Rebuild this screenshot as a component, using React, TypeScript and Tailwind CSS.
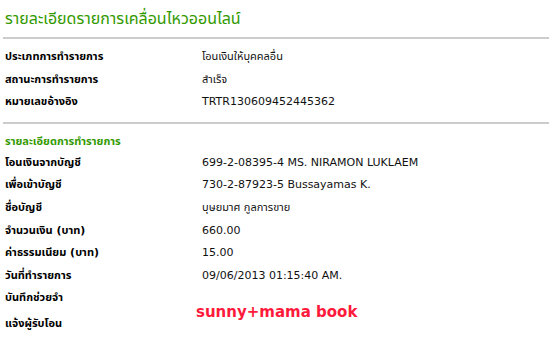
const FONT = "font-['Tahoma','DejaVu_Sans','Noto_Sans_Thai',sans-serif]";

const TOP_ROWS: [string, string][] = [
  ['ประเภทการทำรายการ', 'โอนเงินให้บุคคลอื่น'],
  ['สถานะการทำรายการ', 'สำเร็จ'],
  ['หมายเลขอ้างอิง', 'TRTR130609452445362'],
];

const DETAIL_ROWS: [string, string][] = [
  ['โอนเงินจากบัญชี', '699-2-08395-4 MS. NIRAMON LUKLAEM'],
  ['เพื่อเข้าบัญชี', '730-2-87923-5 Bussayamas K.'],
  ['ชื่อบัญชี', 'บุษยมาศ กูลการขาย'],
  ['จำนวนเงิน (บาท)', '660.00'],
  ['ค่าธรรมเนียม (บาท)', '15.00'],
  ['วันที่ทำรายการ', '09/06/2013 01:15:40 AM.'],
  ['บันทึกช่วยจำ', ''],
  ['แจ้งผู้รับโอน', ''],
];

function Row({ label, value, last }: { label: string; value: string; last?: boolean }) {
  return (
    <div className={`flex items-center ${last ? 'h-[26px] pt-[3px]' : 'h-[22.6px]'}`}>
      <div className="w-[197px] shrink-0 font-bold text-black">{label}</div>
      <div className="text-[#111]">{value}</div>
    </div>
  );
}

export default function App() {
  return (
    <div className={`relative h-[341px] w-[559px] bg-white ${FONT} text-[11px]`}>
      <div className="ml-[3px] w-[546px] pt-[8px]">
        <h1 className="h-[29px] pl-[2px] text-[16px] leading-[22px] text-[#339900]">
          รายละเอียดรายการเคลื่อนไหวออนไลน์
        </h1>
        <div className="h-[2px] bg-[#cccccc]" />
        <div className="pl-[2px] pt-[7px]">
          {TOP_ROWS.map(([l, v]) => (
            <Row key={l} label={l} value={v} />
          ))}
        </div>
        <div className="mt-[8px] h-[2px] bg-[#cccccc]" />
        <div className="pl-[2px] pt-[8px]">
          <div className="h-[20px] font-bold leading-[20px] text-[#339900]">รายละเอียดการทำรายการ</div>
          {DETAIL_ROWS.map(([l, v], i) => (
            <Row key={l} label={l} value={v} last={i === DETAIL_ROWS.length - 1} />
          ))}
        </div>
      </div>
      {/* watermark */}
      <div className="absolute left-[196px] top-[303px] text-[15px] leading-[19px] font-bold text-[#ff1a3c]">
        sunny+mama book
      </div>
    </div>
  );
}
